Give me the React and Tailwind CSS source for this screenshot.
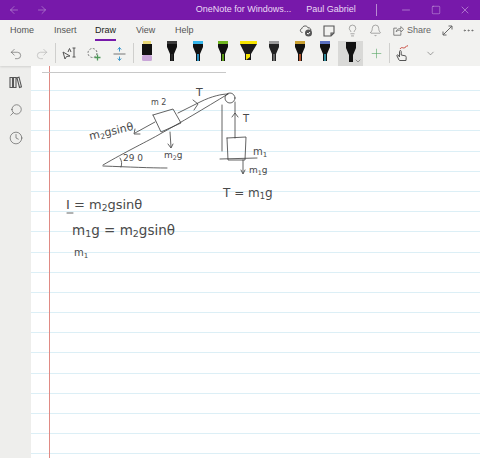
import { ArrowLeft, ArrowRight, Bell, ChevronDown, Clock, Lightbulb, Minus, MoreHorizontal, Plus, Redo2, Search, Square, Undo2, X } from "lucide-react";

const FONT = "font-['Liberation_Sans',sans-serif]";

const PENS = [
  { band: "#3a3a3a", tip: "#2a2a2a" },
  { band: "#35b5ea", tip: "#2a8fc0" },
  { band: "#6fb51f", tip: "#5a9a18" },
];
const PENS_AFTER = [
  { band: "#9a9a9a", tip: "#666666", body: "#222222" },
  { band: "#c9a030", tip: "#b0532a" },
  { band: "#5a70c0", tip: "#2f8a9a" },
];

function Pen({ band, tip, body = "#111111" }) {
  return (
    <svg width="12" height="21" viewBox="0 0 12 21">
      <rect x="1" y="0" width="10" height="3" fill={band} />
      <polygon points="1,3 11,3 11,6 8,13 8,20 4,20 4,13 1,6" fill={body} />
      <polygon points="5,13 7,13 7,20 5,20" fill={tip} />
    </svg>
  );
}

function Eraser() {
  return (
    <svg width="12" height="21" viewBox="0 0 12 21">
      <rect x="2" y="0" width="8" height="3" fill="#e8d878" />
      <rect x="1" y="3" width="10" height="11" fill="#111111" />
      <rect x="1" y="14" width="10" height="6" rx="1.5" fill="#c9a6d8" />
    </svg>
  );
}

function Highlighter() {
  return (
    <svg width="17" height="21" viewBox="0 0 17 21">
      <rect x="0" y="0" width="17" height="3" fill="#f5e400" />
      <polygon points="0,3 17,3 11,13 11,19 5,19 5,13" fill="#1a1a1a" />
      <polygon points="6,13 10,13 10,16 6,19" fill="#f5e400" />
    </svg>
  );
}

function ToolBox({ children, className = "w-[25.5px]" }) {
  return <div className={`flex h-full shrink-0 items-center justify-center ${className}`}>{children}</div>;
}

function LassoText() {
  return (
    <svg width="14" height="14" viewBox="0 0 14 14" fill="none" stroke="#555555" strokeWidth="1">
      <path d="M1 5l2 7 1.5-2.5L8 9z" />
      <path d="M6 5l1.5-3.5L9 5" />
      <path d="M10.5 1h3M12 1v9M10.5 10h3" />
    </svg>
  );
}

function LassoAdd() {
  return (
    <svg width="14" height="14" viewBox="0 0 14 14" fill="none">
      <circle cx="5.5" cy="6" r="4.5" stroke="#777777" strokeDasharray="2 1.5" />
      <path d="M10.5 7.5v6M7.5 10.5h6" stroke="#4f9a5a" strokeWidth="1.3" />
    </svg>
  );
}

function SpaceTool() {
  return (
    <svg width="13" height="14" viewBox="0 0 13 14" fill="none">
      <path d="M0.5 7h12" stroke="#777777" />
      <path d="M6.5 0.5v4M4.8 2.5l1.7-2 1.7 2M6.5 9.5v4M4.8 11.500l1.7 2 1.700-2" stroke="#3a96cc" />
    </svg>
  );
}

function HandInk() {
  return (
    <svg width="14" height="18" viewBox="0 0 14 18" fill="none">
      <path d="M4 15l-2-4c-.5-1 .6-1.600 1.300-.8L4.500 12V6.500c0-1.300 1.700-1.300 1.700 0V10l4 .8c.8.2 1 .7 1 1.500L11 15.500H4.500z" stroke="#555555" />
      <path d="M5 4c2-3 3 0 5-1.500S11 1 13 .8" stroke="#c8453a" />
    </svg>
  );
}

function CloudSync() {
  return (
    <svg width="14" height="13" viewBox="0 0 14 13" fill="none">
      <path d="M3.500 8.500C1 8.500.5 5 3 4.500 3.500 1.500 8 1 9 3.800c2.500-.3 3.500 2 2.500 3.500" stroke="#555555" />
      <circle cx="9.500" cy="9" r="3.500" fill="#555555" />
      <path d="M8 9l1.200 1.200L11 8" stroke="#ffffff" />
    </svg>
  );
}

function NoteIcon() {
  return (
    <svg width="12" height="12" viewBox="0 0 12 12" fill="none" stroke="#555555" strokeWidth="1.100">
      <path d="M1 1h10v7l-3 3H1zM11 8H8v3" />
    </svg>
  );
}

function ShareIcon() {
  return (
    <svg width="11" height="11" viewBox="0 0 14 13" fill="none" stroke="#666666">
      <path d="M5 3.500H1v9h9V9" />
      <path d="M4 8c.5-3 3-4 6-4V1.500L13.500 5 10 8.500V6C8 6 5.500 6.500 4 8z" />
    </svg>
  );
}

function ExpandIcon() {
  return (
    <svg width="11" height="11" viewBox="0 0 11 11" fill="none" stroke="#666666">
      <path d="M1 10l9-9M6.500 1H10v3.500M1 6.500V10h3.500" />
    </svg>
  );
}

function LibraryIcon() {
  return (
    <svg width="13" height="13" viewBox="0 0 13 12" fill="none" stroke="#555555" strokeWidth="1.100">
      <path d="M1 1h2.500v10H1zM4.500 1H7v10H4.500zM8 1.300l2-.6 2.500 9.700-2 .6z" />
    </svg>
  );
}

function TitleBar() {
  return (
    <div className={`flex h-[20px] shrink-0 items-center bg-[#7719aa] text-[9px] text-[#ecd9f5] ${FONT}`}>
      <div className="ml-[8px] flex w-[56px] items-center gap-[16px] text-[#c39ad9]">
        <ArrowLeft size={12} strokeWidth={1.200} />
        <ArrowRight size={12} strokeWidth={1.200} />
      </div>
      <span className="ml-[132px] w-[111px] whitespace-nowrap">OneNote for Windows...</span>
      <span className="w-[70px] whitespace-nowrap">Paul Gabriel</span>
      <div className="h-[12px] w-px bg-[#b98ad2]" />
      <div className="ml-[14px] flex items-center text-[#e3cdef]">
        <div className="flex w-[30px] justify-center"><Minus size={12} strokeWidth={1} /></div>
        <div className="flex w-[29px] justify-center"><Square size={10} strokeWidth={1} /></div>
        <div className="flex w-[30px] justify-center"><X size={12} strokeWidth={1} /></div>
      </div>
    </div>
  );
}

function TabRow() {
  return (
    <div className={`flex h-[21px] items-center text-[9px] text-[#555555] ${FONT}`}>
      <span className="ml-[10px] w-[44px]">Home</span>
      <span className="w-[41px]">Insert</span>
      <span className="relative w-[41px] text-[#222222]">
        Draw
        <span className="absolute left-0 top-[15px] h-[2px] w-[21px] bg-[#7719aa]" />
      </span>
      <span className="w-[39px]">View</span>
      <span className="w-[119px]">Help</span>
      <div className="flex items-center text-[#666666]">
        <div className="flex w-[24px] justify-center"><CloudSync /></div>
        <div className="flex w-[22px] justify-center"><NoteIcon /></div>
        <div className="flex w-[24px] justify-center"><Lightbulb size={13} strokeWidth={1} /></div>
        <div className="flex w-[22px] justify-center"><Bell size={13} strokeWidth={1} /></div>
        <div className="ml-[7px] flex w-[44px] items-center gap-[3px]">
          <ShareIcon />
          <span>Share</span>
        </div>
        <div className="flex w-[20px] justify-center"><ExpandIcon /></div>
        <div className="flex w-[22px] justify-center"><MoreHorizontal size={13} strokeWidth={1.500} /></div>
      </div>
    </div>
  );
}

function ToolRow() {
  return (
    <div className="flex h-[25px] items-start pl-[3px]">
      <ToolBox className="w-[26px]"><Undo2 size={14} strokeWidth={1} color="#555555" /></ToolBox>
      <ToolBox className="w-[26px]"><Redo2 size={14} strokeWidth={1} color="#aaaaaa" /></ToolBox>
      <div className="mt-[2px] h-[20px] w-px bg-[#cfcfcd]" />
      <ToolBox><LassoText /></ToolBox>
      <ToolBox><LassoAdd /></ToolBox>
      <ToolBox><SpaceTool /></ToolBox>
      <div className="mt-[2px] h-[20px] w-px bg-[#cfcfcd]" />
      <ToolBox className="w-[26px] pb-[5px]"><Eraser /></ToolBox>
      {PENS.map((pen, i) => (
        <ToolBox key={i} className="w-[25.5px] pb-[5px]"><Pen {...pen} /></ToolBox>
      ))}
      <ToolBox className="w-[25.5px] pb-[5px]"><Highlighter /></ToolBox>
      {PENS_AFTER.map((pen, i) => (
        <ToolBox key={i} className="w-[25.5px] pb-[5px]"><Pen {...pen} /></ToolBox>
      ))}
      <div className="relative flex h-[25px] w-[25px] shrink-0 items-center justify-center bg-[#d9d9d7] pb-[2px]">
        <Pen band="#111111" tip="#111111" />
        <ChevronDown size={8} strokeWidth={1.500} color="#444444" className="absolute bottom-[1px] right-[1px]" />
      </div>
      <ToolBox className="w-[26px]"><Plus size={15} strokeWidth={1} color="#5aa868" /></ToolBox>
      <div className="mt-[2px] h-[20px] w-px bg-[#cfcfcd]" />
      <ToolBox className="w-[24px]"><HandInk /></ToolBox>
      <ToolBox className="ml-[2px] w-[28px]"><ChevronDown size={11} strokeWidth={1.200} color="#555555" /></ToolBox>
    </div>
  );
}

function InkText({ x, y, size = 10, rotate, children }) {
  return (
    <text
      x={x}
      y={y}
      fontSize={size}
      fontFamily="'DejaVu Sans', sans-serif"
      fill="#4a4a4a"
      stroke="none"
      transform={rotate ? `rotate(${rotate} ${x} ${y})` : undefined}
    >
      {children}
    </text>
  );
}

function Sub({ children }) {
  return <tspan fontSize="0.700em" dy="2">{children}</tspan>;
}

function Up({ children }) {
  return <tspan dy="-2">{children}</tspan>;
}

function Ink() {
  return (
    <svg
      className="absolute left-0 top-0"
      width="449"
      height="392"
      viewBox="31 66 449 392"
      fill="none"
      stroke="#3c3c3c"
      strokeWidth="0.800"
      strokeLinecap="round"
      strokeLinejoin="round"
    >
      {/* incline and base */}
      <path d="M103 165C125 152 150 140 160 134C180 123 205 108 228 94" />
      <path d="M103 166C130 167 150 168 167 168" />
      <path d="M120 158C122 161 122 164 121 167" />
      {/* string and T arrow */}
      <path d="M178 113L200 102C212 96 222 94 228 94" />
      <path d="M193 100L198 104L194 110" />
      {/* m2 block */}
      <path d="M153 115L173 109L181 123L161 132L153 115" />
      {/* m2 arrows */}
      <path d="M155 122L135 133M135 129L134 134L140 134" />
      <path d="M170 132L171 147M168 144L171 148L173 144" />
      {/* pulley */}
      <circle cx="230" cy="98" r="5" />
      <path d="M222 105L222 151" />
      <path d="M235 102L235 138" />
      <path d="M232 117L235 113L238 117" />
      {/* m1 block */}
      <path d="M227 138L246 137L245 160L228 160L227 138" />
      <path d="M220 159L257 158" />
      <path d="M243 160L243 173M241 170L243 174L245 170" />
      {/* under line of I */}
      <path d="M67 213L73 213" />

      <InkText x={151} y={105} size={8}>m 2</InkText>
      <InkText x={196} y={96} size={11}>T</InkText>
      <InkText x={90} y={140} size={11} rotate={-13}>m<Sub>2</Sub><Up>gsinθ</Up></InkText>
      <InkText x={123} y={161} size={9}>29 0</InkText>
      <InkText x={164} y={158} size={9}>m<Sub>2</Sub><Up>g</Up></InkText>
      <InkText x={243} y={122} size={10}>T</InkText>
      <InkText x={253} y={155} size={10}>m<Sub>1</Sub></InkText>
      <InkText x={249} y={173} size={9}>m<Sub>1</Sub><Up>g</Up></InkText>
      <InkText x={223} y={197} size={12}>T = m<Sub>1</Sub><Up>g</Up></InkText>
      <InkText x={66} y={209} size={13}>I = m<Sub>2</Sub><Up>gsinθ</Up></InkText>
      <InkText x={72} y={235} size={13.500}>m<Sub>1</Sub><Up>g = m</Up><Sub>2</Sub><Up>gsinθ</Up></InkText>
      <InkText x={74} y={256} size={10}>m<Sub>1</Sub></InkText>
    </svg>
  );
}

function Page() {
  const lines = Array.from({ length: 19 }, (_, i) => i);
  return (
    <div className="relative min-h-0 flex-1 overflow-hidden bg-white">
      {/* ruled lines */}
      <div className="pt-[24px]">
        {lines.map((i) => (
          <div key={i} className="h-[20.2px]">
            <div className="h-px bg-[#dceff6]" />
          </div>
        ))}
      </div>
      <div className="absolute bottom-0 left-[18px] top-0 w-px bg-[#e08a84]" />
      <div className="absolute left-[11px] top-[6px] h-px w-[184px] bg-[#c8c8c8]" />
      <Ink />
    </div>
  );
}

export default function App() {
  return (
    <div className="flex h-[458px] w-[480px] flex-col overflow-hidden bg-white">
      <TitleBar />
      <div className="relative h-[46px] shrink-0 bg-[#f2f2f0] shadow-[0_1px_2px_rgba(0,0,0,0.12)]">
        <TabRow />
        <ToolRow />
      </div>
      <div className="flex min-h-0 flex-1">
        <div className="flex w-[31px] shrink-0 flex-col items-center gap-[14px] bg-[#eeeeec] pt-[10px] text-[#555555]">
          <LibraryIcon />
          <Search size={14} strokeWidth={1.100} className="-scale-x-100" />
          <Clock size={14} strokeWidth={1.100} />
        </div>
        <Page />
      </div>
    </div>
  );
}
